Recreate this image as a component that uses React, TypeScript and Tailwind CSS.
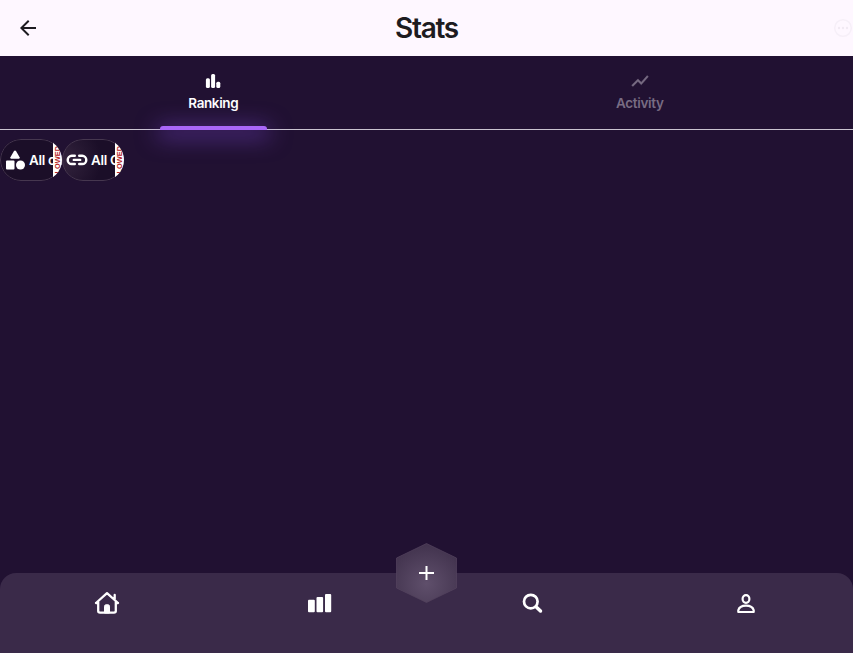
import React from "react";

function OverflowStripe() {
  return (
    <span className="absolute inset-y-0 -right-px flex w-[10.5px] items-center justify-center overflow-hidden bg-white">
      <span className="-rotate-90 whitespace-nowrap font-['Liberation_Sans',sans-serif] text-[7.4px] leading-none font-bold text-[#b52020]">
        LOWED
      </span>
    </span>
  );
}

function FilterPill({ label, tone, children }: { label: string; tone: string; children: React.ReactNode }) {
  return (
    <button className={`relative h-[42px] w-[62px] overflow-hidden rounded-[21px] ${tone}`}>
      <span className="flex h-full items-center gap-[3px] pl-[4px] text-[13.5px] font-semibold tracking-[-0.35px] whitespace-nowrap text-white">
        {children}
        <span>{label}</span>
      </span>
      <span className="absolute inset-0 rounded-[21px] border border-[#46374f]" />
      <OverflowStripe />
    </button>
  );
}

export default function App() {
  return (
    <div className="flex h-[653px] w-[853px] flex-col overflow-hidden bg-[#211132] font-[Inter,sans-serif]">
      <header className="relative flex h-14 shrink-0 items-center justify-center bg-[#fef7ff]">
        <svg className="absolute left-4 top-4" width="24" height="24" viewBox="0 0 24 24" fill="#1d1b20">
          <path d="M20 11H7.83l5.59-5.59L12 4l-8 8 8 8 1.41-1.41L7.83 13H20z" />
        </svg>
        <h1 className="text-[28px] leading-[36px] font-semibold tracking-[-1.3px] text-[#1d1b20]">Stats</h1>
        <svg className="absolute right-0 top-[18px]" width="20" height="20" viewBox="0 0 20 20" fill="none">
          <circle cx="10" cy="10" r="8.3" stroke="#f6eff8" strokeWidth="1.5" />
          <g fill="#f1eaf3"><circle cx="6" cy="10" r="1.2" /><circle cx="10" cy="10" r="1.2" /><circle cx="14" cy="10" r="1.2" /></g>
        </svg>
      </header>

      <nav className="relative flex h-[74px] shrink-0 border-b border-[#cac4d0]">
        <div className="flex flex-1 flex-col items-center pt-[15px] text-white">
          <svg width="20" height="20" viewBox="0 0 20 20" fill="currentColor">
            <rect x="2.9" y="7.2" width="4" height="9.8" rx="1.5" />
            <rect x="8.1" y="3" width="4" height="14" rx="1.5" />
            <rect x="13.3" y="10.7" width="4" height="6.3" rx="1.5" />
          </svg>
          <span className="mt-[2px] text-[13.5px] leading-[20px] font-semibold tracking-[-0.4px]">Ranking</span>
        </div>
        <div className="flex flex-1 flex-col items-center pt-[15px] text-[#786c83]">
          <svg width="20" height="20" viewBox="0 0 24 24" fill="currentColor" stroke="currentColor" strokeWidth="0.5">
            <path d="M3.5 18.49l6-6.01 4 4L22 6.92l-1.41-1.41-7.09 7.97-4-4L2 16.99z" />
          </svg>
          <span className="mt-[2px] text-[13.5px] leading-[20px] font-semibold tracking-[-0.33px]">Activity</span>
        </div>
        <span className="absolute bottom-[-1px] left-[160px] h-[4px] w-[107px] rounded-t-[3px] bg-[#a967f8] shadow-[0_4px_22px_3px_rgba(130,76,225,0.6)]" />
      </nav>

      <main className="flex flex-1 items-start pt-[9px]">
        <FilterPill label="All categories" tone="bg-[#1b0e28]">
          <svg className="shrink-0" width="22" height="22" viewBox="0 0 22 22" fill="white">
            <path d="M11 1.5Q11.6 1.5 12 2.1L15.6 8.3Q16.1 9.6 14.9 9.7H7.1Q5.9 9.6 6.4 8.3L10 2.1Q10.4 1.5 11 1.5Z" />
            <rect x="2" y="11.5" width="8.5" height="9" rx="1" />
            <circle cx="16.5" cy="16" r="4.5" />
          </svg>
        </FilterPill>
        <FilterPill label="All Chains" tone="bg-[radial-gradient(circle_at_left,#34243e_0%,#1b0e28_60%)]">
          <svg className="shrink-0" width="22" height="22" viewBox="0 0 22 22" fill="none" stroke="white" strokeWidth="2.4" strokeLinecap="round">
            <path d="M8.8 6.8H5.8a4.1 4.1 0 0 0 0 8.2H8.8M13.2 6.8h3a4.1 4.1 0 0 1 0 8.2H13.2M7.8 10.9h6.4" />
          </svg>
        </FilterPill>
      </main>

      <footer className="relative h-20 shrink-0 rounded-t-[16px] bg-[#3a2a49]">
        <div className="grid h-[60px] grid-cols-4 place-items-center">
          <svg width="28" height="26" viewBox="0 0 28 26" fill="none" stroke="white" strokeWidth="2.3" strokeLinejoin="round" strokeLinecap="round">
            <path d="M3 13L14 3.2L25 13M5.2 12V21Q5.2 22.6 7 22.6H21Q22.8 22.6 22.8 21V12M3 13h2.2M25 13h-2.2M21.7 9V5" />
            <path d="M11.5 22.6V16.3Q11.5 14.8 13 14.8H15Q16.5 14.8 16.5 16.3V22.6Z" fill="white" strokeWidth="1" />
          </svg>
          <svg width="26" height="26" viewBox="0 0 26 26" fill="white">
            <rect x="1" y="9.8" width="6.8" height="12.4" rx="1" />
            <rect x="9.5" y="7" width="6.6" height="15.2" rx="1" />
            <rect x="18" y="4.1" width="6.2" height="18.1" rx="1" />
          </svg>
          <svg className="-translate-x-[0.5px]" width="24" height="24" viewBox="0 0 24 24" fill="none" stroke="white" strokeLinecap="round">
            <circle cx="10.3" cy="10.6" r="6.8" strokeWidth="2.7" />
            <path d="M16 16.3L20 20" strokeWidth="3.5" />
          </svg>
          <svg width="24" height="24" viewBox="0 0 24 24" fill="none" stroke="white" strokeWidth="2.2">
            <ellipse cx="12" cy="8" rx="3.4" ry="3.8" />
            <path d="M4.3 21V19.3C5 16.3 8 14.6 12 14.6s7 1.7 7.7 4.7v1.7Z" strokeLinejoin="round" />
          </svg>
        </div>
        <button className="absolute -top-[30px] left-[396px] h-[60px] w-[61px]" aria-label="Add">
          <svg width="61" height="60" viewBox="0 0 61 60" fill="none">
            <defs>
              <radialGradient id="hexFill" cx="50%" cy="68%" r="65%">
                <stop offset="0" stopColor="#5f4f6b" />
                <stop offset="1" stopColor="#43344f" />
              </radialGradient>
            </defs>
            <path d="M30.5 .5L60.5 15V45L30.5 59.5L.5 45V15Z" fill="url(#hexFill)" stroke="#54445f" strokeWidth="0.7" />
            <path d="M30.5 23v14M23 30h15" stroke="white" strokeWidth="2" />
          </svg>
        </button>
      </footer>
    </div>
  );
}
